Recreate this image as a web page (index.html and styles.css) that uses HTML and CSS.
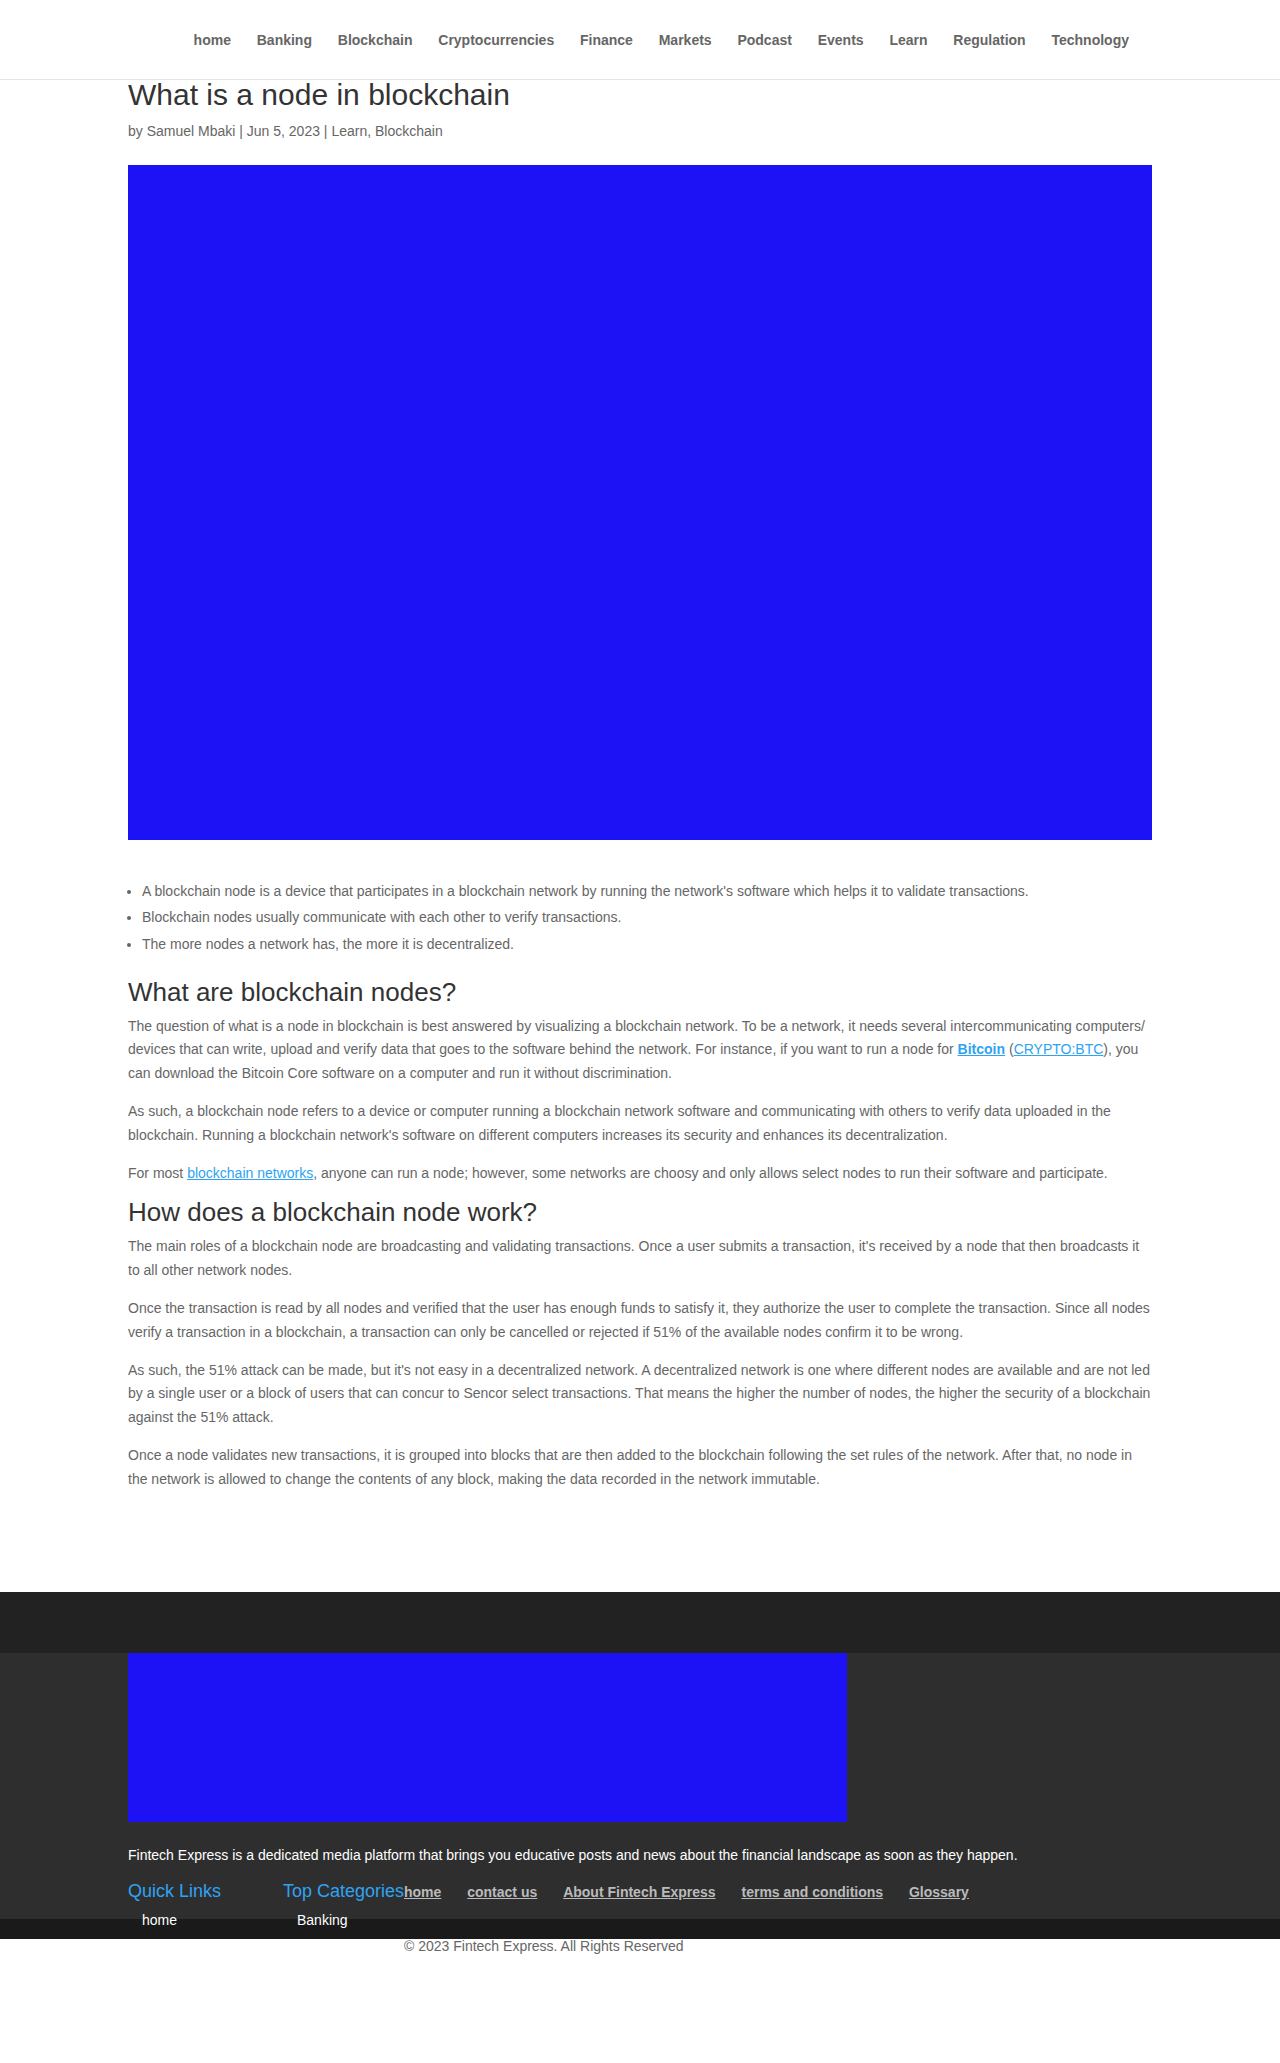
FILE: index.html
```
<!DOCTYPE html>
<html lang="en">
<head>
<meta charset="utf-8">
<title>What is a node in blockchain</title>
<link rel="stylesheet" href="styles.css">
</head>
<body>
<header class="site-header">
  <div class="header-inner">
    <nav class="main-nav">
      <a href="#">home</a>
      <a href="#">Banking</a>
      <a href="#">Blockchain</a>
      <a href="#">Cryptocurrencies</a>
      <a href="#">Finance</a>
      <a href="#">Markets</a>
      <a href="#">Podcast</a>
      <a href="#">Events</a>
      <a href="#">Learn</a>
      <a href="#">Regulation</a>
      <a href="#">Technology</a>
    </nav>
  </div>
</header>

<main class="container article">
  <h1 class="post-title">What is a node in blockchain</h1>
  <p class="post-meta">by <a href="#">Samuel Mbaki</a> | Jun 5, 2023 | <a href="#">Learn</a>, <a href="#">Blockchain</a></p>
  <div class="featured-image"></div>

  <div class="post-content">
    <ul class="key-points">
      <li>A blockchain node is a device that participates in a blockchain network by running the network's software which helps it to validate transactions.</li>
      <li>Blockchain nodes usually communicate with each other to verify transactions.</li>
      <li>The more nodes a network has, the more it is decentralized.</li>
    </ul>

    <h2>What are blockchain nodes?</h2>
    <p>The question of what is a node in blockchain is best answered by visualizing a blockchain network. To be a network, it needs several intercommunicating computers/ devices that can write, upload and verify data that goes to the software behind the network. For instance, if you want to run a node for <a class="strong-link" href="#">Bitcoin</a> (<a href="#">CRYPTO:BTC</a>), you can download the Bitcoin Core software on a computer and run it without discrimination.</p>
    <p>As such, a blockchain node refers to a device or computer running a blockchain network software and communicating with others to verify data uploaded in the blockchain. Running a blockchain network's software on different computers increases its security and enhances its decentralization.</p>
    <p>For most <a href="#">blockchain networks</a>, anyone can run a node; however, some networks are choosy and only allows select nodes to run their software and participate.</p>

    <h2>How does a blockchain node work?</h2>
    <p>The main roles of a blockchain node are broadcasting and validating transactions. Once a user submits a transaction, it's received by a node that then broadcasts it to all other network nodes.</p>
    <p>Once the transaction is read by all nodes and verified that the user has enough funds to satisfy it, they authorize the user to complete the transaction. Since all nodes verify a transaction in a blockchain, a transaction can only be cancelled or rejected if 51% of the available nodes confirm it to be wrong.</p>
    <p>As such, the 51% attack can be made, but it's not easy in a decentralized network. A decentralized network is one where different nodes are available and are not led by a single user or a block of users that can concur to Sencor select transactions. That means the higher the number of nodes, the higher the security of a blockchain against the 51% attack.</p>
    <p>Once a node validates new transactions, it is grouped into blocks that are then added to the blockchain following the set rules of the network. After that, no node in the network is allowed to change the contents of any block, making the data recorded in the network immutable.</p>
  </div>
</main>

<footer class="site-footer">
  <div class="footer-top"></div>
  <div class="footer-main">
    <div class="container">
      <div class="footer-banner"></div>
      <p class="footer-about">Fintech Express is a dedicated media platform that brings you educative posts and news about the financial landscape as soon as they happen.</p>
      <div class="widget widget-quick">
        <h4>Quick Links</h4>
        <ul><li><a href="#">home</a></li></ul>
      </div>
      <div class="widget widget-cats">
        <h4>Top Categories</h4>
        <ul><li><a href="#">Banking</a></li></ul>
      </div>
      <p class="footer-links"><a href="#">home</a> <a href="#">contact us</a> <a href="#">About Fintech Express</a> <a href="#">terms and conditions</a> <a href="#">Glossary</a></p>
    </div>
  </div>
  <div class="footer-bar"></div>
  <div class="container">
    <p class="copyright">© 2023 Fintech Express. All Rights Reserved</p>
  </div>
</footer>
</body>
</html>
```

FILE: styles.css
```
html, body {
  margin: 0;
  padding: 0;
  background: #fff;
}

body {
  font-family: "Liberation Sans", Arial, Helvetica, sans-serif;
  font-size: 14px;
  line-height: 23.8px;
  color: #666;
}

a {
  color: #2ea3f2;
}

.container {
  width: 1024px;
  margin: 0 auto;
}

/* Header */
.site-header {
  height: 79px;
  border-bottom: 1px solid #e5e5e5;
}

.header-inner {
  width: 1024px;
  height: 100%;
  margin: 0 auto;
  padding: 3px 23px 0 0;
  box-sizing: border-box;
  display: flex;
  align-items: center;
  justify-content: flex-end;
}

.main-nav {
  display: flex;
  gap: 25.8px;
}

.main-nav a {
  color: #666;
  font-weight: bold;
  text-decoration: none;
}

/* Article */
.article {
  padding-bottom: 100px;
}

.post-title {
  margin: 0;
  padding-bottom: 10px;
  font-size: 30px;
  line-height: 30px;
  font-weight: normal;
  color: #333;
}

.post-meta {
  margin: 0 0 21px;
  color: #666;
}

.post-meta a {
  color: #666;
  text-decoration: none;
}

.featured-image {
  height: 675px;
  background: #1c12f5;
}

.key-points {
  margin: 38px 0 0;
  padding: 0 0 21px 14px;
}

.key-points li {
  line-height: 26.6px;
}

.post-content h2 {
  margin: 0;
  padding-bottom: 10px;
  font-size: 26px;
  line-height: 26px;
  font-weight: normal;
  color: #333;
}

.post-content p {
  margin: 0;
  padding-bottom: 14px;
}

.post-content p:last-child {
  padding-bottom: 0;
}

.strong-link {
  font-weight: bold;
}

/* Footer */
.footer-top {
  height: 61px;
  background: #222;
}

.footer-main {
  background: #2e2e2e;
}

.footer-banner {
  width: 719px;
  height: 169px;
  margin-bottom: 22px;
  background: #1c12f5;
}

.footer-about {
  margin: 0;
  padding-bottom: 14px;
  color: #fff;
}

.widget {
  float: left;
}

.widget-quick {
  width: 155px;
}

.widget-cats {
  width: 121px;
}

.widget h4 {
  margin: 0;
  padding-bottom: 6px;
  font-size: 18px;
  line-height: 21.6px;
  font-weight: normal;
  color: #2ea3f2;
  white-space: nowrap;
}

.widget ul {
  margin: 0;
  padding: 0 0 23px 14px;
  list-style: none;
}

.widget a {
  color: #fff;
  text-decoration: none;
}

.footer-links {
  margin: 0;
  padding-bottom: 14px;
}

.footer-links a {
  color: #bbb;
  font-weight: bold;
  margin-right: 22px;
}

.footer-bar {
  height: 20px;
  background: #1a1a1a;
}

.copyright {
  margin: 0;
  line-height: 14px;
  color: #666;
}
```
